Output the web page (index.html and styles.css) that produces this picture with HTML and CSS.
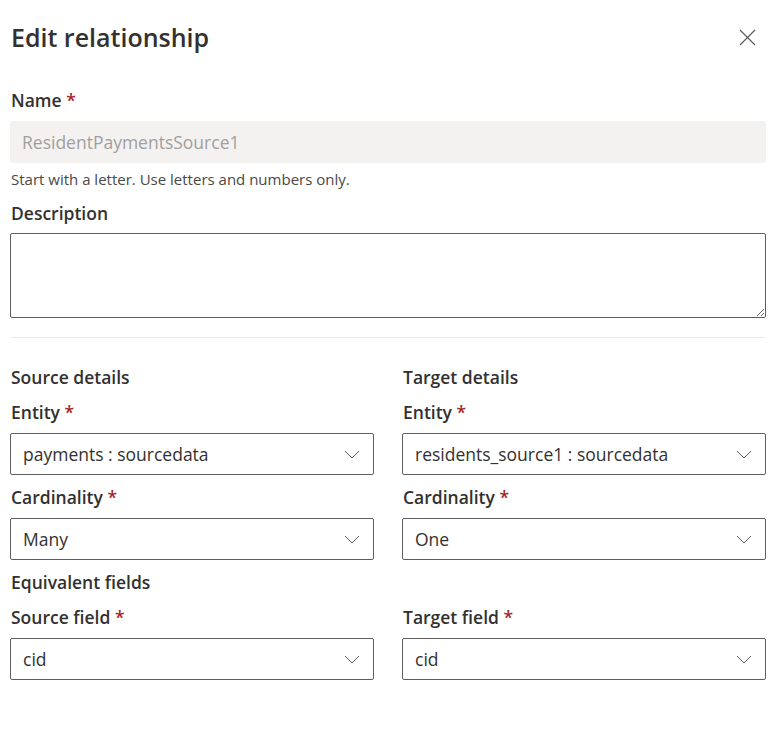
FILE: index.html
```html
<!DOCTYPE html>
<html lang="en">
<head>
<meta charset="utf-8">
<title>Edit relationship</title>
<link rel="stylesheet" href="styles.css">
</head>
<body>
<div class="panel">
  <div class="header">
    <h1 class="title">Edit relationship</h1>
    <button class="close" aria-label="Close">
      <svg width="17" height="17" viewBox="0 0 17 17"><path d="M1 1 L16 16 M16 1 L1 16" stroke="#605e5c" stroke-width="1.3" fill="none"/></svg>
    </button>
  </div>

  <div class="field">
    <label class="label">Name <span class="req">*</span></label>
    <div class="input disabled">ResidentPaymentsSource1</div>
    <div class="hint">Start with a letter. Use letters and numbers only.</div>
  </div>

  <div class="field desc">
    <label class="label">Description</label>
    <textarea class="textarea"></textarea>
  </div>

  <div class="divider"></div>

  <div class="grid">
    <div class="col">
      <div class="section">Source details</div>
      <div class="field">
        <label class="label">Entity <span class="req">*</span></label>
        <div class="dropdown"><span>payments : sourcedata</span><svg class="chev" width="16" height="9" viewBox="0 0 16 9"><path d="M1 1 L8 8 L15 1" stroke="#605e5c" stroke-width="1" fill="none"/></svg></div>
      </div>
      <div class="field">
        <label class="label">Cardinality <span class="req">*</span></label>
        <div class="dropdown"><span>Many</span><svg class="chev" width="16" height="9" viewBox="0 0 16 9"><path d="M1 1 L8 8 L15 1" stroke="#605e5c" stroke-width="1" fill="none"/></svg></div>
      </div>
    </div>
    <div class="col">
      <div class="section">Target details</div>
      <div class="field">
        <label class="label">Entity <span class="req">*</span></label>
        <div class="dropdown"><span>residents_source1 : sourcedata</span><svg class="chev" width="16" height="9" viewBox="0 0 16 9"><path d="M1 1 L8 8 L15 1" stroke="#605e5c" stroke-width="1" fill="none"/></svg></div>
      </div>
      <div class="field">
        <label class="label">Cardinality <span class="req">*</span></label>
        <div class="dropdown"><span>One</span><svg class="chev" width="16" height="9" viewBox="0 0 16 9"><path d="M1 1 L8 8 L15 1" stroke="#605e5c" stroke-width="1" fill="none"/></svg></div>
      </div>
    </div>
  </div>

  <div class="section equiv">Equivalent fields</div>
  <div class="grid">
    <div class="col">
      <div class="field">
        <label class="label">Source field <span class="req">*</span></label>
        <div class="dropdown"><span>cid</span><svg class="chev" width="16" height="9" viewBox="0 0 16 9"><path d="M1 1 L8 8 L15 1" stroke="#605e5c" stroke-width="1" fill="none"/></svg></div>
      </div>
    </div>
    <div class="col">
      <div class="field">
        <label class="label">Target field <span class="req">*</span></label>
        <div class="dropdown"><span>cid</span><svg class="chev" width="16" height="9" viewBox="0 0 16 9"><path d="M1 1 L8 8 L15 1" stroke="#605e5c" stroke-width="1" fill="none"/></svg></div>
      </div>
    </div>
  </div>
</div>
</body>
</html>
```

FILE: styles.css
```css
* { box-sizing: border-box; }
html, body { margin: 0; background: #ffffff; }
body {
  font-family: "Open Sans", "Noto Sans", sans-serif;
  color: #323130;
}
.panel {
  padding: 21px 5px 0 10px;
}
.header {
  display: flex;
  justify-content: space-between;
  align-items: center;
  height: 32px;
  margin-bottom: 37px;
}
.title {
  margin: 0 0 0 1px;
  font-size: 25px;
  font-weight: 600;
  line-height: 32px;
  color: #323130;
}
.close {
  border: 0;
  background: none;
  padding: 0;
  margin: 0 10px 0 0;
  width: 17px;
  height: 17px;
  display: flex;
}
.field { display: flex; flex-direction: column; }
.label {
  font-size: 17.5px;
  font-weight: 600;
  line-height: 20px;
  margin: 0 0 11px 1px;
  color: #323130;
}
.req { color: #a4262c; }
.input {
  height: 42px;
  display: flex;
  align-items: center;
  padding: 0 12px;
  font-size: 17.5px;
  border-radius: 2px;
}
.input.disabled {
  background: #f3f2f1;
  color: #a19f9d;
}
.hint {
  margin: 7px 0 0 1px;
  font-size: 15px;
  line-height: 18px;
  color: #4a4846;
}
.desc { margin-top: 15px; }
.desc .label { margin-bottom: 10px; }
.textarea {
  display: block;
  width: 100%;
  height: 85px;
  border: 1px solid #605e5c;
  border-radius: 2px;
  resize: vertical;
  font-family: inherit;
  font-size: 17.5px;
  padding: 6px 12px;
  margin: 0;
}
.divider {
  height: 1px;
  background: #edebe9;
  margin: 19px 0 29px;
}
.grid {
  display: grid;
  grid-template-columns: 1fr 1fr;
  column-gap: 28px;
}
.col { display: flex; flex-direction: column; gap: 12px; }
.section {
  font-size: 17.5px;
  font-weight: 600;
  line-height: 20px;
  margin: 0 0 3px 1px;
  color: #323130;
}
.equiv { margin: 12px 0 15px 1px; }
.dropdown {
  height: 42px;
  border: 1px solid #605e5c;
  border-radius: 2px;
  display: flex;
  align-items: center;
  justify-content: space-between;
  padding: 0 13px 0 12px;
  font-size: 17.5px;
  color: #323130;
}
```
